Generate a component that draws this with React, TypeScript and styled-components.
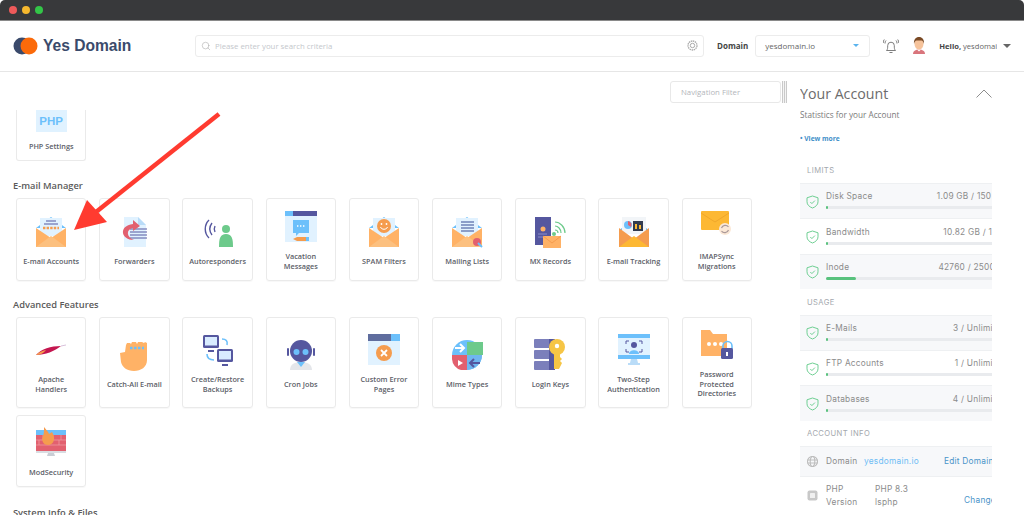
import React from 'react';
import styled, { createGlobalStyle } from 'styled-components';
import { Search } from 'lucide-react';

const Global = createGlobalStyle`
  html, body { margin: 0; padding: 0; background: #fff; }
  * { box-sizing: border-box; }
  body { font-family: "Open Sans", "Liberation Sans", sans-serif; }
`;

const Page = styled.div`
  position: relative;
  width: 1024px;
  height: 515px;
  overflow: hidden;
  background: #fff;
  display: flex;
  flex-direction: column;
`;
const TitleBar = styled.div`
  flex: none;
  height: 21px;
  background: #38393b;
  border-bottom: 1px solid #8a8a8a;
  border-radius: 5px 5px 0 0;
  display: flex;
  align-items: center;
  gap: 5px;
  padding: 0 0 1px 9px;
`;
const Dot = styled.span<{ $c: string }>`
  width: 8px;
  height: 8px;
  border-radius: 50%;
  background: ${p => p.$c};
`;
const Header = styled.header`
  flex: none;
  height: 51px;
  border-bottom: 1px solid #e6e6e6;
  display: flex;
  align-items: center;
  padding: 0 0 1px 13px;
`;
const LogoBlock = styled.div`
  width: 182px;
  display: flex;
  align-items: center;
  gap: 5px;
`;
const LogoText = styled.span`
  font-family: "Liberation Sans", Arial, sans-serif;
  font-weight: 700;
  font-size: 15.6px;
  color: #3a4a6b;
`;
const SearchBox = styled.div`
  width: 509px;
  height: 22px;
  border: 1px solid #ececec;
  border-radius: 3px;
  display: flex;
  align-items: center;
  padding: 0 5px;
  gap: 4px;
  color: #a6a6a6;
`;
const SearchText = styled.span`
  flex: 1;
  font-size: 7.8px;
  color: #c4c7cc;
`;
const DomainLabel = styled.span`
  margin-left: 13px;
  font-size: 8px;
  font-weight: 700;
  color: #444;
`;
const DomainSelect = styled.div`
  margin-left: 7px;
  width: 115px;
  height: 22px;
  border: 1px solid #ececec;
  border-radius: 3px;
  display: flex;
  align-items: center;
  justify-content: space-between;
  padding: 0 10px 0 9px;
  font-size: 8px;
  color: #666;
`;
const Caret = styled.span<{ $c: string; $w: number }>`
  width: 0;
  height: 0;
  border-left: ${p => p.$w}px solid transparent;
  border-right: ${p => p.$w}px solid transparent;
  border-top: ${p => p.$w}px solid ${p => p.$c};
`;
const BellSlot = styled.div`
  margin-left: 13px;
  display: flex;
`;
const AvatarSlot = styled.div`
  margin-left: 14px;
  display: flex;
`;
const Hello = styled.span`
  margin-left: 14px;
  width: 58px;
  white-space: nowrap;
  overflow: hidden;
  font-size: 7.6px;
  color: #666;
  & b { color: #444; }
`;
const HelloCaret = styled.div`
  margin-left: 6px;
  display: flex;
`;
const Body = styled.div`
  flex: 1;
  min-height: 0;
  display: flex;
`;
const Main = styled.main`
  width: 800px;
  flex: none;
  padding: 9px 13px 0 13px;
  overflow: hidden;
`;
const FilterRow = styled.div`
  height: 22px;
  display: flex;
  justify-content: flex-end;
  gap: 1px;
`;
const FilterInput = styled.div`
  width: 111px;
  border: 1px solid #e8e8e8;
  border-radius: 3px;
  display: flex;
  align-items: center;
  padding-left: 10px;
  font-size: 7.8px;
  color: #b3b6bb;
`;
const Grip = styled.div`
  width: 5px;
  background: repeating-linear-gradient(90deg, #c9c9c9 0 1px, #f4f4f4 1px 2px);
`;
const Grid = styled.div`
  margin: 5px 0 0 3px;
  display: grid;
  grid-template-columns: repeat(9, 70.4px);
  column-gap: 12.8px;
  row-gap: 7px;
`;
const Card = styled.div<{ $h: number }>`
  height: ${p => p.$h}px;
  border: 1px solid #eaeaea;
  border-radius: 3px;
  box-shadow: 0 1px 1px rgba(0,0,0,.03);
  display: flex;
  flex-direction: column;
  align-items: center;
  justify-content: center;
  padding: 3px 3px 0;
`;
const ClippedCard = styled.div`
  margin: 7px 0 0 3px;
  width: 70.4px;
  height: 51px;
  border: 1px solid #eaeaea;
  border-top: 0;
  border-radius: 0 0 3px 3px;
  display: flex;
  flex-direction: column;
  align-items: center;
`;
const PhpBadge = styled.div`
  width: 31px;
  height: 22px;
  background: #e0f2ff;
  color: #6cc0fb;
  font-family: "Liberation Sans", sans-serif;
  font-weight: 700;
  font-size: 11.5px;
  display: flex;
  align-items: center;
  justify-content: center;
`;
const CardLabel = styled.div<{ $top?: number }>`
  margin-top: ${p => p.$top ?? 9}px;
  font-size: 7.3px;
  font-weight: 600;
  line-height: 9.5px;
  color: #5c6068;
  text-align: center;
  white-space: pre-line;
`;
const SectionTitle = styled.h3<{ $top: number }>`
  margin: ${p => p.$top}px 0 0;
  font-size: 9.3px;
  font-weight: 600;
  line-height: 14px;
  color: #5a5a5a;
`;
const Side = styled.aside`
  width: 192px;
  flex: none;
  overflow: hidden;
  padding-top: 11px;
`;
const SideHead = styled.div`
  display: flex;
  justify-content: space-between;
  align-items: center;
  height: 20px;
`;
const SideTitle = styled.h2`
  margin: 0;
  font-size: 14.2px;
  font-weight: 400;
  color: #6c6c6c;
  white-space: nowrap;
`;
const SideSub = styled.p`
  margin: 6px 0 0;
  font-size: 8.2px;
  line-height: 12px;
  color: #7a7a7a;
`;
const ViewMore = styled.a`
  display: block;
  margin-top: 13px;
  font-size: 6.7px;
  line-height: 10px;
  font-weight: 700;
  color: #3f8fc9;
`;
const GroupTitle = styled.div<{ $top: number }>`
  margin: ${p => p.$top}px 0 6px;
  padding-left: 7px;
  height: 13px;
  display: flex;
  align-items: center;
  font-family: Inter, "Open Sans", sans-serif;
  font-size: 7.6px;
  letter-spacing: .4px;
  color: #a3a7ad;
`;
const StatRow = styled.div<{ $alt: boolean }>`
  width: 192px;
  height: 35.4px;
  background: ${p => (p.$alt ? '#f7f8fa' : '#fff')};
  border-top: 1px solid #eef0f2;
  display: flex;
  align-items: center;
  padding: 0 0 2px 6px;
  gap: 7px;
  color: #6fcf93;
`;
const StatBody = styled.div`
  flex: none;
  width: 180px;
  display: flex;
  flex-direction: column;
  gap: 5px;
`;
const StatTop = styled.div`
  display: flex;
  justify-content: space-between;
  font-family: Inter, "Open Sans", sans-serif;
  font-size: 8.3px;
  letter-spacing: .25px;
  line-height: 10px;
  color: #8b8b8b;
  white-space: nowrap;
`;
const Track = styled.div`
  height: 3px;
  border-radius: 2px;
  background: #e9ebee;
`;
const Fill = styled.div`
  height: 100%;
  border-radius: 2px;
  background: #58c27d;
`;
const InfoRow = styled.div<{ $alt: boolean; $h: number }>`
  width: 192px;
  height: ${p => p.$h}px;
  background: ${p => (p.$alt ? '#f7f8fa' : '#fff')};
  border-top: 1px solid #eef0f2;
  display: flex;
  align-items: center;
  padding-left: 7px;
  font-family: Inter, "Open Sans", sans-serif;
  font-size: 8.3px;
  letter-spacing: .25px;
  line-height: 13px;
  color: #8b8b8b;
  white-space: nowrap;
`;
const InfoIcon = styled.div`
  width: 19px;
  flex: none;
  display: flex;
`;
const InfoKey = styled.div<{ $w: number }>`
  width: ${p => p.$w}px;
  flex: none;
`;
const InfoLink = styled.span<{ $c: string; $ml: number }>`
  flex: none;
  color: ${p => p.$c};
  margin-left: ${p => p.$ml}px;
`;
const ChangeLink = styled.span`
  flex: none;
  margin: 9px 0 0 39px;
  color: #4a94c9;
`;
const ShieldSvg = styled.svg`
  flex: none;
  margin-top: 3px;
`;
const ArrowOverlay = styled.svg`
  position: absolute;
  left: 0;
  top: 0;
  pointer-events: none;
`;

const O = '#ffb266', OD = '#f59c4e', B = '#6cc0fb', L = '#e1f2ff', P = '#55579f', G = '#6dca8b', R = '#e2606f', Y = '#fdb833';

const Ico: React.FC<{ children: React.ReactNode }> = ({ children }) => (
  <svg width="32" height="32" viewBox="0 0 32 32">{children}</svg>
);

const Envelope = () => (
  <>
    <path d="M1 12 16 1l15 11z" fill={B} />
    <rect x="5" y="2" width="22" height="18" fill={L} />
    <path d="M1 12l15 10 15-10v19H1z" fill={O} />
    <path d="M1 31l15-11 15 11z" fill="#fcc07f" />
  </>
);

const icons: Record<string, React.ReactNode> = {
  mail: <Ico><Envelope /><path d="M11 5h10M9 8h14" stroke={P} strokeWidth="1" /><path d="M8 12h16" stroke={OD} strokeWidth="2.4" strokeDasharray="2.4 1.2" /></Ico>,
  fwd: <Ico><path d="M6 1h14l8 8v22H6z" fill={L} /><path d="M20 1l8 8h-8z" fill="#b9dcf8" /><path d="M12 13h17M12 16h17M12 19h17M12 22h17" stroke={P} strokeWidth="1" /><path d="M16 24C3 24 0 10 15 8V4l7 6-7 5v-3C8 13 8 21 16 24z" fill={R} /></Ico>,
  auto: <Ico><path d="M7 4C2 9 2 17 7 22M10 7C7 11 7 15 10 19M13 10c-1 2-1 4 0 6" fill="none" stroke={P} strokeWidth="1.4" /><circle cx="24" cy="13" r="4" fill={G} /><path d="M17 31c0-8 1-13 7-13s7 5 7 13z" fill={G} /></Ico>,
  vac: <Ico><rect y="0" width="32" height="31" fill={L} /><rect width="32" height="5" fill={P} /><rect width="8" height="5" fill={B} /><path d="M8 9h16v13H14l-3 3v-3H8z" fill={B} /><path d="M12 15h8" stroke="#fff" strokeWidth="1.4" strokeDasharray="1.4 1.6" /><path d="M8 28l4-2h9v4h-9z" fill={OD} /><rect x="21" y="26" width="3" height="4" fill={B} /></Ico>,
  spam: <Ico><Envelope /><circle cx="16" cy="10" r="7" fill={OD} /><path d="M12.5 11c1 3 6 3 7 0" stroke="#fff" fill="none" /><circle cx="13.5" cy="8" r=".9" fill="#fff" /><circle cx="18.5" cy="8" r=".9" fill="#fff" /></Ico>,
  list: <Ico><Envelope /><path d="M10 6h13M10 9h13M10 12h13M10 15h13" stroke="#6f83b8" strokeWidth="1.3" /><circle cx="26" cy="26" r="4" fill={R} /><path d="M27 27l4 4" stroke={B} strokeWidth="2" /></Ico>,
  mx: <Ico><rect x="1" y="1" width="16" height="28" fill={P} /><circle cx="9" cy="13" r="2.5" fill={O} /><path d="M4 18h9M4 21h6" stroke="#8b8dc8" /><path d="M21 6c5 0 10 5 10 11M21 10c3 0 6 3 6 7M21 14c2 0 3 1 3 3" stroke={G} fill="none" strokeWidth="1.2" /><circle cx="20" cy="18" r="2" fill={G} /><rect x="9" y="20" width="18" height="12" fill={O} /><path d="M9 20l9 7 9-7" stroke={OD} fill="none" /></Ico>,
  track: <Ico><path d="M1 14 16 4l15 10z" fill={B} /><rect x="4" y="1" width="24" height="17" fill="#f2f5f8" /><circle cx="10" cy="9" r="4" fill={B} /><path d="M10 9V5a4 4 0 0 1 3 6z" fill={R} /><rect x="15" y="5" width="10" height="10" fill="#333c4f" /><path d="M18 8v5M22 9v4" stroke={Y} strokeWidth="2" /><path d="M1 12l15 11 15-11v19H1z" fill={OD} /><path d="M1 31l15-11 15 11z" fill={Y} /></Ico>,
  sync: <Ico><rect x="0" y="0" width="28" height="19" rx="1" fill={Y} /><path d="M0 2l14 9 14-9" fill="none" stroke="#f0a72a" /><circle cx="24" cy="18" r="6" fill="#fbe8d6" /><path d="M20.5 17a4 4 0 0 1 7-1M27.5 19a4 4 0 0 1-7 1" fill="none" stroke="#a99" strokeWidth="1.2" /></Ico>,
  apache: <Ico><path d="M1 21c5-6 15-9 25-9-6 5-16 9-25 9z" fill="#c4164f" /><path d="M1 21c3-3 6-4 10-5-2 3-6 5-10 5z" fill={OD} /><path d="M26 12l5-1" stroke="#d9c2dc" /></Ico>,
  hand: <Ico><path d="M2 14l5-1 1-7 1-2h3l1 1 1-2h4l1 2 1-2h4l2 1 1-1 2 1v17c0 7-6 11-13 11S4 28 3 23z" fill={O} /><path d="M12 9h14" stroke={B} strokeWidth="2.4" strokeDasharray="2.5 1.5" /></Ico>,
  backup: <Ico><rect x="1" y="1" width="16" height="13" rx="1.5" fill={P} /><rect x="3" y="3" width="12" height="8.5" fill="#d9ecff" /><path d="M6 17h6" stroke={P} strokeWidth="2" /><rect x="15" y="15" width="16" height="13" rx="1.5" fill={P} /><rect x="17" y="17" width="12" height="8.5" fill="#d9ecff" /><path d="M20 31h6" stroke={P} strokeWidth="2" /><path d="M20 5c4 0 6 2 5 6M5 20c0 4 2 6 7 6" fill="none" stroke={B} strokeWidth="1.6" /></Ico>,
  cron: <Ico><path d="M5 31c0-6 5-8 11-8s11 2 11 8z" fill="#e4e6ea" /><circle cx="16" cy="12" r="11" fill={P} /><circle cx="11.5" cy="13" r="3" fill={B} /><circle cx="20.5" cy="13" r="3" fill={B} /><rect x="2" y="9" width="2" height="8" rx="1" fill={P} /><rect x="28" y="9" width="2" height="8" rx="1" fill={P} /><path d="M12 23h8l-4 5z" fill={B} /></Ico>,
  err: <Ico><rect y="0" width="32" height="31" fill={L} /><rect width="32" height="7" fill="#5f6d9e" /><rect x="23" width="9" height="7" fill={B} /><circle cx="16" cy="19" r="8" fill={OD} /><path d="M13 16l6 6M19 16l-6 6" stroke="#fff" strokeWidth="1.8" /></Ico>,
  mime: <Ico><circle cx="16" cy="16" r="15" fill={B} /><path d="M16 16h15a15 15 0 0 1-15 15z" fill="#6fb6ef" /><path d="M1 16h15v15H10a12 12 0 0 1-9-11z" fill={R} /><rect x="16" y="3" width="16" height="13" fill={G} /><path d="M4 9h8M9 5l4 4-4 4" stroke="#fff" strokeWidth="2" fill="none" /><path d="M29 24H19M23 20l-4 4 4 4" stroke={P} strokeWidth="2" fill="none" /><path d="M7 21l5 3-5 3z" fill="#fff" /></Ico>,
  key: <Ico><rect x="0" y="0" width="21" height="9" rx="1" fill="#7b7fbb" /><rect x="0" y="11" width="21" height="9" rx="1" fill="#7b7fbb" /><rect x="0" y="22" width="21" height="9" rx="1" fill="#7b7fbb" /><rect x="15" y="0" width="6" height="31" fill={P} /><circle cx="23" cy="8" r="8" fill="#f6c545" /><path d="M20 14h6v4l2 2-2 2 2 2-3 6h-5z" fill="#f6c545" /><circle cx="23" cy="7" r="2.2" fill="#fff" /></Ico>,
  two: <Ico><rect y="0" width="32" height="25" rx="1" fill={L} /><rect width="32" height="4" fill={B} /><rect y="21" width="32" height="4" fill={B} /><circle cx="16" cy="11" r="3" fill={P} /><path d="M11 20c0-5 10-5 10 0z" fill={B} /><path d="M8 10V7h3M24 10V7h-3M8 15v3h3M24 15v3h-3" stroke={P} fill="none" /><path d="M13 25h6l1 4h-8z" fill="#b9dcf8" /><path d="M10 30h12" stroke="#b9dcf8" strokeWidth="2" /></Ico>,
  lock: <Ico><path d="M0 1h9l3 4h14v22H0z" fill={O} /><circle cx="8" cy="15" r="2" fill="#fff" /><circle cx="14" cy="15" r="2" fill="#fff" /><circle cx="20" cy="15" r="2" fill="#fff" /><path d="M22 20v-3a4.5 4.5 0 0 1 9 0v3" fill="none" stroke={B} strokeWidth="1.6" /><rect x="20" y="19" width="12" height="11" rx="1.5" fill={P} /><rect x="25" y="23" width="2" height="4" fill="#fff" /></Ico>,
  mod: <Ico><rect x="1" y="3" width="30" height="21" fill={R} /><rect x="1" y="3" width="30" height="5" fill={B} /><path d="M1 13h30M1 18h30M8 8v5M18 8v5M26 8v5M4 13v5M14 13v5M24 13v5" stroke="#f0a0a8" strokeWidth=".7" /><path d="M9 0c3 4 4 4 5 7 1-1 2-1 3-2 4 6 2 13-4 13-5 0-7-5-5-9 1-2 1-5 1-9z" fill={OD} /><rect x="1" y="24" width="30" height="2" fill="#d9dde2" /><path d="M13 26h6l1 3h-8z" fill="#c9ced5" /></Ico>,
};

const Logo = () => (
  <svg width="25" height="18" viewBox="0 0 25 18">
    <circle cx="9" cy="9" r="8.5" fill="#3a4a6b" />
    <circle cx="16" cy="9" r="8.5" fill="#fb6a0a" />
  </svg>
);
const Gear = () => (
  <svg width="11" height="11" viewBox="0 0 11 11">
    <circle cx="5.5" cy="5.5" r="4.5" fill="none" stroke="#aaa" strokeWidth="1.3" strokeDasharray="1.5 .6" />
    <circle cx="5.5" cy="5.5" r="2.2" fill="none" stroke="#aaa" />
  </svg>
);
const Bell = () => (
  <svg width="16" height="16" viewBox="0 0 16 16" fill="none" stroke="#6f6f6f" strokeWidth=".9">
    <path d="M3.5 12.500c1.200-1.200 1.200-2.500 1.200-5a3.300 3.300 0 0 1 6.600 0c0 2.500 0 3.800 1.200 5z" />
    <path d="M6.500 14.500h3" />
    <path d="M3 2.500C2.200 3.300 2 4.200 2 5.500M1.300 1.500C.5 2.500.2 3.500.2 5M13 2.500c.8.800 1 1.700 1 3M14.700 1.500c.8 1 1.100 2 1.100 3.500" />
  </svg>
);
const Avatar = () => (
  <svg width="12" height="17" viewBox="0 0 12 17">
    <path d="M0 17c0-3 2.500-4.500 6-4.500s6 1.500 6 4.500z" fill="#d9757c" />
    <path d="M4 12.500h4l-2 2z" fill="#fff" />
    <ellipse cx="6" cy="7" rx="4.500" ry="5.500" fill="#f6c39b" />
    <path d="M1 7C.5 2.500 3 0 6 0s5.500 2.500 5 7c-.5-2-1.500-3.500-2.500-3.500h-5C2.500 3.500 1.500 5 1 7z" fill="#7a4a25" />
  </svg>
);
const Shield = () => (
  <ShieldSvg width="13" height="14" viewBox="0 0 13 14" fill="none" stroke="currentColor" strokeWidth="1">
    <path d="M6.500 1 12 2.800v4c0 3-2.300 5-5.500 6.200C3.300 11.800 1 9.800 1 6.800v-4z" />
    <path d="M4.300 7l1.600 1.600 3-3" />
  </ShieldSvg>
);
const GlobeIcon = () => (
  <svg width="11" height="11" viewBox="0 0 11 11" fill="none" stroke="#bdbdbd" strokeWidth="1.1">
    <circle cx="5.5" cy="5.5" r="5" />
    <ellipse cx="5.5" cy="5.5" rx="2.3" ry="5" />
    <path d="M.5 4h10M.5 7h10" />
  </svg>
);
const ChipIcon = () => (
  <svg width="11" height="11" viewBox="0 0 11 11">
    <rect x=".5" y=".5" width="10" height="10" rx="2" fill="#c8c8c8" />
    <rect x="3" y="3" width="5" height="5" rx=".6" fill="#f0f0f0" />
  </svg>
);
const Chevron = () => (
  <svg width="16" height="9" viewBox="0 0 16 9" fill="none" stroke="#808080" strokeWidth=".9">
    <path d="M.5 8.500 8 1l7.500 7.500" />
  </svg>
);

const row1: [string, string][] = [
  ['mail', 'E-mail Accounts'], ['fwd', 'Forwarders'], ['auto', 'Autoresponders'], ['vac', 'Vacation\nMessages'],
  ['spam', 'SPAM Filters'], ['list', 'Mailing Lists'], ['mx', 'MX Records'], ['track', 'E-mail Tracking'], ['sync', 'IMAPSync\nMigrations'],
];
const row2: [string, string][] = [
  ['apache', 'Apache\nHandlers'], ['hand', 'Catch-All E-mail'], ['backup', 'Create/Restore\nBackups'], ['cron', 'Cron Jobs'],
  ['err', 'Custom Error\nPages'], ['mime', 'Mime Types'], ['key', 'Login Keys'], ['two', 'Two-Step\nAuthentication'], ['lock', 'Password\nProtected\nDirectories'],
];
const limits = [
  { n: 'Disk Space', v: '1.09 GB / 150 GB', p: 1 },
  { n: 'Bandwidth', v: '10.82 GB / 1 TB', p: 1 },
  { n: 'Inode', v: '42760 / 250000', p: 16.5 },
];
const usage = [
  { n: 'E-Mails', v: '3 / Unlimited', p: 1 },
  { n: 'FTP Accounts', v: '1 / Unlimited', p: 1 },
  { n: 'Databases', v: '4 / Unlimited', p: 1 },
];

const Stats: React.FC<{ rows: { n: string; v: string; p: number }[] }> = ({ rows }) => (
  <>
    {rows.map((r, i) => (
      <StatRow key={r.n} $alt={i % 2 === 0}>
        <Shield />
        <StatBody>
          <StatTop><span>{r.n}</span><span>{r.v}</span></StatTop>
          <Track><Fill style={{ width: `${r.p}%` }} /></Track>
        </StatBody>
      </StatRow>
    ))}
  </>
);

export default function App() {
  return (
    <Page>
      <Global />
      <TitleBar>
        <Dot $c="#ee5a5a" />
        <Dot $c="#f5b82e" />
        <Dot $c="#33c648" />
      </TitleBar>
      <Header>
        <LogoBlock>
          <Logo />
          <LogoText>Yes Domain</LogoText>
        </LogoBlock>
        <SearchBox>
          <Search size={10} strokeWidth={1.3} />
          <SearchText>Please enter your search criteria</SearchText>
          <Gear />
        </SearchBox>
        <DomainLabel>Domain</DomainLabel>
        <DomainSelect>
          yesdomain.io
          <Caret $c="#5ab3ee" $w={3.5} />
        </DomainSelect>
        <BellSlot><Bell /></BellSlot>
        <AvatarSlot><Avatar /></AvatarSlot>
        <Hello><b>Hello,</b> yesdomain</Hello>
        <HelloCaret><Caret $c="#666" $w={4} /></HelloCaret>
      </Header>
      <Body>
        <Main>
          <FilterRow>
            <FilterInput>Navigation Filter</FilterInput>
            <Grip />
          </FilterRow>
          <ClippedCard>
            <PhpBadge>PHP</PhpBadge>
            <CardLabel $top={10}>PHP Settings</CardLabel>
          </ClippedCard>
          <SectionTitle $top={18}>E-mail Manager</SectionTitle>
          <Grid>
            {row1.map(([k, t]) => (
              <Card key={k} $h={83}>{icons[k]}<CardLabel>{t}</CardLabel></Card>
            ))}
          </Grid>
          <SectionTitle $top={17}>Advanced Features</SectionTitle>
          <Grid>
            {row2.map(([k, t]) => (
              <Card key={k} $h={91}>{icons[k]}<CardLabel>{t}</CardLabel></Card>
            ))}
            <Card $h={72}>{icons.mod}<CardLabel>ModSecurity</CardLabel></Card>
          </Grid>
          <SectionTitle $top={19}>System Info &amp; Files</SectionTitle>
        </Main>
        <Side>
          <SideHead>
            <SideTitle>Your Account</SideTitle>
            <Chevron />
          </SideHead>
          <SideSub>Statistics for your Account</SideSub>
          <ViewMore>• View more</ViewMore>
          <GroupTitle $top={20}>LIMITS</GroupTitle>
          <Stats rows={limits} />
          <GroupTitle $top={6.5}>USAGE</GroupTitle>
          <Stats rows={usage} />
          <GroupTitle $top={6.5}>ACCOUNT INFO</GroupTitle>
          <InfoRow $alt $h={30}>
            <InfoIcon><GlobeIcon /></InfoIcon>
            <InfoKey $w={38}>Domain</InfoKey>
            <InfoLink $c="#6dbcf5" $ml={0}>yesdomain.io</InfoLink>
            <InfoLink $c="#4a94c9" $ml={25}>Edit Domain</InfoLink>
          </InfoRow>
          <InfoRow $alt={false} $h={38}>
            <InfoIcon><ChipIcon /></InfoIcon>
            <InfoKey $w={49}>PHP<br />Version</InfoKey>
            <InfoKey $w={50}>PHP 8.3<br />lsphp</InfoKey>
            <ChangeLink>Change</ChangeLink>
          </InfoRow>
        </Side>
      </Body>
      <ArrowOverlay width="1024" height="515" viewBox="0 0 1024 515">
        <path d="M219 114 96 212" stroke="#ff3b30" strokeWidth="4.5" />
        <path d="M74 230 87 200 107 222z" fill="#ff3b30" />
      </ArrowOverlay>
    </Page>
  );
}
